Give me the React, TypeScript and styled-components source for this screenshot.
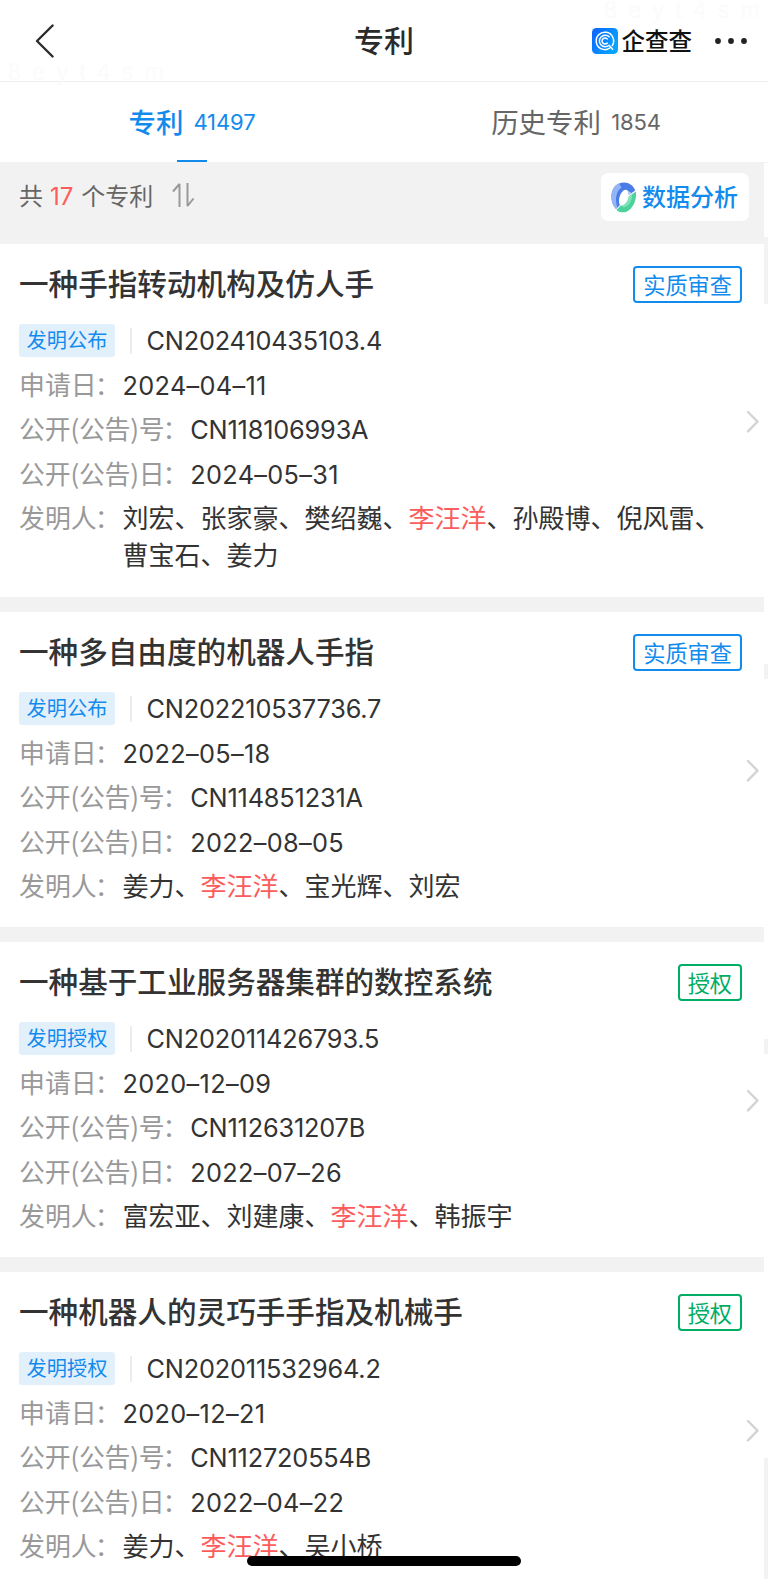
import React from 'react';
import styled, { createGlobalStyle } from 'styled-components';

const GlobalStyle = createGlobalStyle`
  * { box-sizing: border-box; }
  body { margin: 0; background: #fff; overflow: hidden; }
`;

const cjk = `'Noto Sans CJK SC', sans-serif`;
const mixed = `Inter, 'Noto Sans CJK SC', sans-serif`;

const Page = styled.div`
  position: relative;
  width: 768px;
  height: 1581px;
  overflow: hidden;
  background: #fff;
  color: #333;
  font-family: ${mixed};
`;

const Header = styled.header`
  display: grid;
  grid-template-columns: 1fr auto 1fr;
  align-items: center;
  height: 82px;
  padding: 0 20px;
  border-bottom: 1px solid #ededed;
`;

const BackButton = styled.div`
  display: flex;
  padding-left: 14px;
`;

const HeaderTitle = styled.h1`
  margin: 0;
  padding-bottom: 3px;
  font: 500 30px/44px ${cjk};
  color: #2b2b2b;
`;

const HeaderActions = styled.div`
  display: flex;
  justify-content: flex-end;
  align-items: center;
`;

const BrandName = styled.span`
  margin: 0 22px 0 4px;
  padding-bottom: 2px;
  font: 500 23.5px/36px ${cjk};
  color: #111;
`;

const Watermark = styled.span<{ $x: number; $y: number }>`
  position: absolute;
  left: ${(p) => p.$x}px;
  top: ${(p) => p.$y}px;
  font: 400 23px/20px 'Liberation Sans', sans-serif;
  letter-spacing: 11.5px;
  margin-right: -12px;
  color: #fbfbfb;
  pointer-events: none;
`;

const Tabs = styled.nav`
  display: flex;
  height: 80px;
`;

const Tab = styled.div<{ $active?: boolean }>`
  position: relative;
  flex: 1;
  display: flex;
  justify-content: center;
  align-items: center;
  gap: 10px;
  font-size: 27.5px;
  color: ${(p) => (p.$active ? '#128bed' : '#666')};
  &::after {
    content: '';
    display: ${(p) => (p.$active ? 'block' : 'none')};
    position: absolute;
    left: 177px;
    bottom: 0;
    width: 30px;
    height: 2.5px;
    background: #128bed;
  }
`;

const TabLabel = styled.span<{ $active?: boolean }>`
  padding-bottom: 3px;
  font-weight: ${(p) => (p.$active ? 500 : 400)};
`;

const TabCount = styled.span`
  font-size: 22px;
  letter-spacing: -0.1px;
`;

const Content = styled.div`
  display: flex;
`;

const Main = styled.main`
  width: 764px;
`;

const Toolbar = styled.div`
  display: flex;
  justify-content: space-between;
  align-items: flex-start;
  height: 82px;
  padding: 11px 15px 0 19px;
  background: #f2f2f2;
`;

const Summary = styled.div`
  display: flex;
  align-items: center;
  height: 46px;
  font-size: 24px;
  color: #666;
  svg { margin: 0 0 2px 19px; }
`;

const SummaryText = styled.span`
  padding-bottom: 4px;
`;

const Count = styled.span`
  margin: 0 8px 0 7px;
  color: #fd5c5c;
`;

const AnalysisButton = styled.button`
  display: flex;
  align-items: center;
  gap: 6px;
  width: 148px;
  height: 48px;
  padding: 0 0 0 10px;
  border: 0;
  border-radius: 7px;
  background: #fff;
  color: #128bed;
`;

const AnalysisText = styled.span`
  padding-bottom: 2px;
  font: 500 24px/36px ${cjk};
`;

const Card = styled.article<{ $height: number }>`
  display: flex;
  align-items: center;
  height: ${(p) => p.$height}px;
  margin-bottom: 15px;
  padding: 0 4.5px 0 19px;
  background: #fff;
`;

const Rail = styled.div`
  flex: 1;
  height: 1419px;
  display: flex;
  flex-direction: column;
`;

const RailBlock = styled.div<{ $height: number; $filled?: boolean }>`
  height: ${(p) => p.$height}px;
  background: ${(p) => (p.$filled ? '#f3f3f3' : '#fff')};
`;

const CardList = styled.div`
  background: #f2f2f2;
`;

const CardBody = styled.div`
  flex: 1;
  align-self: flex-start;
  margin-right: 3.5px;
  padding-top: 21.5px;
`;

const TitleRow = styled.div`
  display: flex;
  justify-content: space-between;
  align-items: center;
  height: 38px;
  margin-bottom: 18.5px;
`;

const Title = styled.h2`
  margin: 0;
  padding-bottom: 3px;
  font: 500 29.6px/38px ${cjk};
  color: #333;
`;

const Status = styled.span<{ $granted: boolean }>`
  height: 37px;
  padding: 0 8px;
  border: 2px solid currentColor;
  border-radius: 4px;
  font: 400 22.2px/32px ${cjk};
  color: ${(p) => (p.$granted ? '#00ad65' : '#128bed')};
`;

const CodeRow = styled.div`
  display: flex;
  align-items: center;
  height: 37px;
  margin-bottom: 7.5px;
`;

const Tag = styled.span`
  width: 96px;
  height: 33px;
  border-radius: 3px;
  background: #e2f0fc;
  font: 400 20.2px/32px ${cjk};
  text-align: center;
  color: #128bed;
`;

const Separator = styled.i`
  width: 2px;
  height: 26px;
  margin: 0 14.5px 0 15px;
  background: #ececec;
`;

const Code = styled.span`
  font-size: 25.3px;
  line-height: 37px;
  letter-spacing: -0.17px;
`;

const DateText = styled.span`
  font-size: 25.3px;
  letter-spacing: 0.32px;
`;

const Field = styled.div`
  display: flex;
  align-items: flex-start;
  margin-bottom: 7.5px;
  font-size: 26px;
  line-height: 37px;
`;

const Label = styled.span<{ $tight?: boolean }>`
  flex: none;
  font: 400 25.9px/34px ${cjk};
  letter-spacing: ${(p) => (p.$tight ? '-0.2px' : '0')};
  color: #999;
`;

const Colon = styled.span`
  margin: 0 2px 0 -2px;
`;

const Value = styled.div`
  display: flex;
  flex-direction: column;
`;

const Highlight = styled.span`
  color: #fd5c5c;
`;

const HomeIndicator = styled.div`
  position: absolute;
  left: 247px;
  top: 1556px;
  width: 274px;
  height: 9.5px;
  border-radius: 5px;
  background: #000;
`;

const BackIcon = () => (
  <svg width="22" height="36" viewBox="0 0 22 36" fill="none" stroke="#2b2b2b" strokeWidth="2.4" strokeLinecap="round" strokeLinejoin="round">
    <path d="M18.6 2.5 3 18l15.6 15.5" />
  </svg>
);

const BrandLogo = () => (
  <svg width="26" height="26" viewBox="0 0 26 26" fill="none">
    <defs>
      <linearGradient id="brand" x1="0" y1="0" x2="1" y2="0.6">
        <stop offset="0" stopColor="#0a62ff" />
        <stop offset="1" stopColor="#08a5ff" />
      </linearGradient>
    </defs>
    <rect width="26" height="26" rx="4.5" fill="url(#brand)" />
    <g stroke="#fff" strokeWidth="1.5" strokeLinecap="round">
      <path d="M17.6 20.2A8.700 8.700 0 1 1 20.2 17.6M17.8 18.2l2.800 3" />
      <path d="M17.2 8.800a5.800 5.800 0 1 0 0 8.400" />
      <path d="M15.2 10.900a3 3 0 1 0 0 4.200" />
    </g>
  </svg>
);

const MoreIcon = () => (
  <svg width="34" height="8" viewBox="0 0 34 8" fill="#222">
    <circle cx="4" cy="4" r="2.9" />
    <circle cx="17" cy="4" r="2.9" />
    <circle cx="30" cy="4" r="2.9" />
  </svg>
);

const SortIcon = () => (
  <svg width="24" height="26" viewBox="0 0 24 26" fill="none" stroke="#999" strokeWidth="2" strokeLinejoin="bevel">
    <path d="M1 9.5 7.5 2v23M21.5 16.5 15.500 24V1" />
  </svg>
);

const RingIcon = () => (
  <svg width="25" height="31" viewBox="0 0 25 31">
    <path d="M5 27C-2 20-1 5 8 1.500 15-1.200 22 2 24.200 8.500L17.800 13C18 8.500 15.500 6.500 12.500 8.500 8.500 11.500 7 18.500 8.800 23.300Z" fill="#4a7ce8" />
    <path d="M4.800 26.800C-2 20-1 5 8 1.500L10.500 5.500C5.500 9 3.500 17 6.300 25.400Z" fill="#93b4f5" />
    <path d="M17.800 13 16.500 8.500 20.500 11Z" fill="#b9c9f3" />
    <path d="M24.800 9.500C26 18 22 27 15.500 29.700 11.500 31.200 7.500 30 5.500 28L9.800 23.600C13.500 24.500 17 20 17.800 14.500Z" fill="#4bd39b" />
    <path d="M17.800 14.500 21 12C21.500 18.500 18 24.500 12.500 25.300L9.800 23.600C13.500 23.600 17 19.500 17.800 14.500Z" fill="#82e3bb" />
  </svg>
);

const ChevronIcon = () => (
  <svg width="14" height="24" viewBox="0 0 14 24" fill="none" stroke="#d4d4d4" strokeWidth="2.4" strokeLinecap="round" strokeLinejoin="round">
    <path d="M2 3l9.500 9.700L2 22.400" />
  </svg>
);

interface Patent {
  title: string;
  status: string;
  granted: boolean;
  tag: string;
  code: string;
  filed: string;
  pubNo: string;
  pubDate: string;
  inventors: [string, string, string];
  moreInventors?: string;
  height: number;
}

const patents: Patent[] = [
  { title: '一种手指转动机构及仿人手', status: '实质审查', granted: false, tag: '发明公布', code: 'CN202410435103.4', filed: '2024–04–11', pubNo: 'CN118106993A', pubDate: '2024–05–31', inventors: ['刘宏、张家豪、樊绍巍、', '李汪洋', '、孙殿博、倪风雷、'], moreInventors: '曹宝石、姜力', height: 353 },
  { title: '一种多自由度的机器人手指', status: '实质审查', granted: false, tag: '发明公布', code: 'CN202210537736.7', filed: '2022–05–18', pubNo: 'CN114851231A', pubDate: '2022–08–05', inventors: ['姜力、', '李汪洋', '、宝光辉、刘宏'], height: 315 },
  { title: '一种基于工业服务器集群的数控系统', status: '授权', granted: true, tag: '发明授权', code: 'CN202011426793.5', filed: '2020–12–09', pubNo: 'CN112631207B', pubDate: '2022–07–26', inventors: ['富宏亚、刘建康、', '李汪洋', '、韩振宇'], height: 315 },
  { title: '一种机器人的灵巧手手指及机械手', status: '授权', granted: true, tag: '发明授权', code: 'CN202011532964.2', filed: '2020–12–21', pubNo: 'CN112720554B', pubDate: '2022–04–22', inventors: ['姜力、', '李汪洋', '、吴小桥'], height: 315 },
];

const PatentCard = ({ patent: p }: { patent: Patent }) => (
  <Card $height={p.height}>
    <CardBody>
      <TitleRow>
        <Title>{p.title}</Title>
        <Status $granted={p.granted}>{p.status}</Status>
      </TitleRow>
      <CodeRow>
        <Tag>{p.tag}</Tag>
        <Separator />
        <Code>{p.code}</Code>
      </CodeRow>
      <Field><Label>申请日<Colon>：</Colon></Label><DateText>{p.filed}</DateText></Field>
      <Field><Label $tight>公开(公告)号<Colon>：</Colon></Label><Code>{p.pubNo}</Code></Field>
      <Field><Label $tight>公开(公告)日<Colon>：</Colon></Label><DateText>{p.pubDate}</DateText></Field>
      <Field>
        <Label>发明人<Colon>：</Colon></Label>
        <Value>
          <div>{p.inventors[0]}<Highlight>{p.inventors[1]}</Highlight>{p.inventors[2]}</div>
          {p.moreInventors && <div>{p.moreInventors}</div>}
        </Value>
      </Field>
    </CardBody>
    <ChevronIcon />
  </Card>
);

export default function App() {
  return (
    <Page lang="zh-CN">
      <GlobalStyle />
      <Header>
        <BackButton><BackIcon /></BackButton>
        <HeaderTitle>专利</HeaderTitle>
        <HeaderActions>
          <BrandLogo />
          <BrandName>企查查</BrandName>
          <MoreIcon />
        </HeaderActions>
      </Header>
      <Watermark $x={8} $y={62}>8eyt4sm</Watermark>
      <Watermark $x={604} $y={0}>8eyt4sm</Watermark>
      <Tabs>
        <Tab $active><TabLabel $active>专利</TabLabel><TabCount>41497</TabCount></Tab>
        <Tab><TabLabel>历史专利</TabLabel><TabCount>1854</TabCount></Tab>
      </Tabs>
      <Content>
        <Main>
          <Toolbar>
            <Summary>
              <SummaryText>共</SummaryText>
              <Count>17</Count>
              <SummaryText>个专利</SummaryText>
              <SortIcon />
            </Summary>
            <AnalysisButton><RingIcon /><AnalysisText>数据分析</AnalysisText></AnalysisButton>
          </Toolbar>
          <CardList>
            {patents.map((p) => <PatentCard key={p.code} patent={p} />)}
          </CardList>
        </Main>
        <Rail>
          <RailBlock $height={1} $filled />
          <RailBlock $height={74} />
          <RailBlock $height={67} $filled />
          <RailBlock $height={360} />
          <RailBlock $height={15} $filled />
          <RailBlock $height={360} />
          <RailBlock $height={15} $filled />
          <RailBlock $height={404} />
          <RailBlock $height={121} $filled />
        </Rail>
      </Content>
      <HomeIndicator />
    </Page>
  );
}
